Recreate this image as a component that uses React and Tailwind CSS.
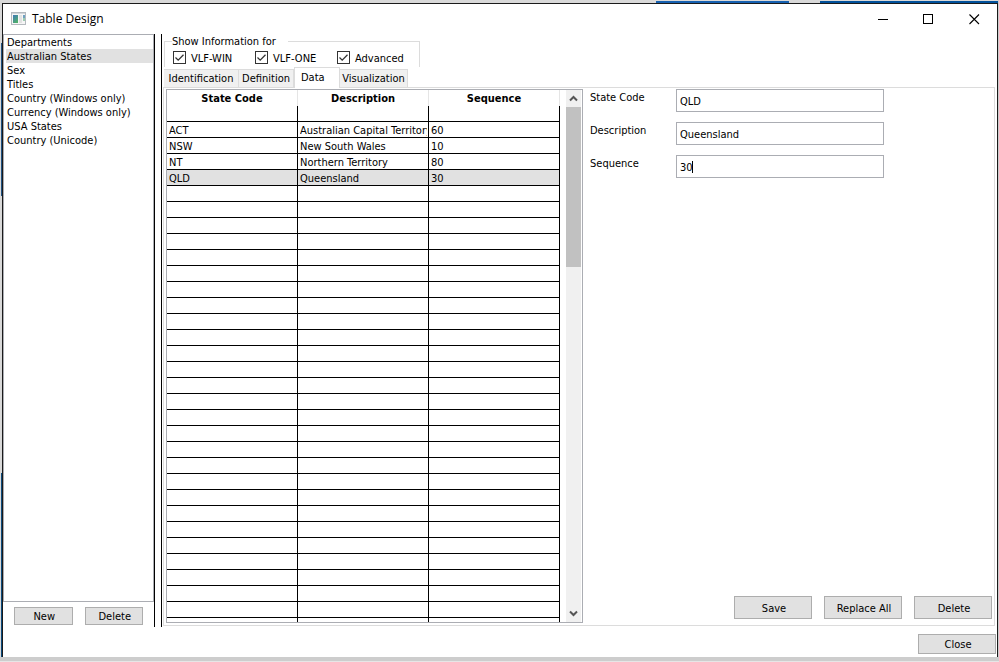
import { useState } from 'react';

const tables = [
  'Departments',
  'Australian States',
  'Sex',
  'Titles',
  'Country (Windows only)',
  'Currency (Windows only)',
  'USA States',
  'Country (Unicode)',
];

const columns = ['State Code', 'Description', 'Sequence'];

const states = [
  ['ACT', 'Australian Capital Territory', '60'],
  ['NSW', 'New South Wales', '10'],
  ['NT', 'Northern Territory', '80'],
  ['QLD', 'Queensland', '30'],
];

const emptyRows = Array.from({ length: 28 }, () => ['', '', '']);

const tabs = [
  { name: 'Identification', width: 'w-[75px]' },
  { name: 'Definition', width: 'w-[55px]' },
  { name: 'Data', width: 'w-[46px]' },
  { name: 'Visualization', width: 'w-[68px]' },
];

function PushButton({ children, className }) {
  return (
    <button type="button" className={`border border-[#adadad] bg-[#e1e1e1] pt-[2px] pl-[2px] text-center leading-[14px] ${className}`}>
      {children}
    </button>
  );
}

function Check({ label, className }) {
  return (
    <label className={`flex items-start gap-[5px] leading-[15px] ${className}`}>
      <span className="relative size-[13px]">
        <input type="checkbox" defaultChecked className="peer block size-[13px] appearance-none border border-[#333] bg-white" />
        <svg viewBox="0 0 13 13" className="pointer-events-none absolute inset-0 hidden size-[13px] peer-checked:block" fill="none" stroke="#333" strokeWidth="1.3">
          <path d="M2.5 6.5 5.2 9.2 10.5 3.8" />
        </svg>
      </span>
      {label}
    </label>
  );
}

function TitleBar() {
  return (
    <header className="flex h-[30px] shrink-0 items-center pl-2">
      <svg width="15" height="15" viewBox="0 0 15 15" className="shrink-0">
        <defs>
          <linearGradient id="pane" x1="0" y1="0" x2="0.6" y2="1">
            <stop offset="0" stopColor="#3f78b8" />
            <stop offset="1" stopColor="#4fae6c" />
          </linearGradient>
        </defs>
        <rect x="0.5" y="0.5" width="14" height="12" fill="#f6f6f6" stroke="#b4b9be" />
        <rect x="1" y="1" width="13" height="1" fill="#d2d6da" />
        <rect x="2" y="3" width="5" height="8" fill="url(#pane)" />
        <rect x="8" y="3" width="3" height="8" fill="#e2e2e2" />
        <rect x="12" y="3" width="2" height="3" fill="#6fa0c0" />
        <rect x="12" y="6" width="2" height="3" fill="#9ccbb0" />
      </svg>
      <h1 className="flex-1 pl-[6px] font-['Open_Sans',sans-serif] text-[12px] leading-4">Table Design</h1>
      <div className="flex pr-[17px]">
        <button type="button" aria-label="Minimize" className="w-[46px]">
          <svg width="11" height="11" className="ml-auto" shapeRendering="crispEdges">
            <path d="M0 5.5h10" stroke="#000" />
          </svg>
        </button>
        <button type="button" aria-label="Maximize" className="w-[45px]">
          <svg width="11" height="11" className="ml-auto" fill="none" shapeRendering="crispEdges">
            <rect x="0.5" y="0.5" width="9" height="9" stroke="#000" />
          </svg>
        </button>
        <button type="button" aria-label="Close window" className="w-[46px]">
          <svg width="11" height="11" className="ml-auto">
            <path d="M0.5 0.5 10 10M10 0.5 0.5 10" stroke="#000" strokeWidth="1.1" />
          </svg>
        </button>
      </div>
    </header>
  );
}

function Sidebar() {
  const [selected, setSelected] = useState('Australian States');

  return (
    <aside className="flex w-[152px] shrink-0 flex-col border-r border-black">
      <ul className="flex-1 border border-[#abadb3] pl-[2px]">
        {tables.map((name) => (
          <li key={name}>
            <button
              type="button"
              onClick={() => setSelected(name)}
              className={`block w-full pt-px pl-px text-left leading-[13px] ${name === selected ? 'bg-[#e1e1e1]' : ''}`}
            >
              {name}
            </button>
          </li>
        ))}
      </ul>
      <div className="flex h-[25px] gap-3 px-[11px] pt-[5px]">
        <PushButton className="h-[18px] flex-1">New</PushButton>
        <PushButton className="h-[18px] flex-1">Delete</PushButton>
      </div>
    </aside>
  );
}

function DataGrid() {
  return (
    <div className="flex w-[417px] overflow-hidden border border-[#abadb3]">
      <div className="relative w-[399px]">
        <div className="absolute inset-0 overflow-hidden">
          <table className="w-[393px] table-fixed border-separate border-spacing-0">
            <thead>
              <tr>
                {columns.map((name) => (
                  <th key={name} className="h-4 border-r border-[#e5e5e5] p-0 text-center font-bold">
                    <div className="h-4 overflow-hidden leading-[18px]">{name}</div>
                  </th>
                ))}
              </tr>
            </thead>
            <tbody>
              {[['', '', ''], ...states, ...emptyRows].map((row, i) => (
                <tr key={i} className={row[0] === 'QLD' ? 'bg-[#e1e1e1]' : ''}>
                  {row.map((cell, j) => (
                    <td key={j} className="h-4 border-r border-b border-black p-0 pr-px pl-[2px]">
                      <div className="h-[15px] overflow-hidden leading-[17px] whitespace-nowrap">{cell}</div>
                    </td>
                  ))}
                </tr>
              ))}
            </tbody>
          </table>
        </div>
      </div>
      <div className="flex w-[15px] flex-col bg-[#f0f0f0]">
        <button type="button" aria-label="Scroll up" className="flex h-[17px] items-center justify-center">
          <svg width="9" height="7" fill="none" stroke="#555" strokeWidth="2">
            <path d="M1 5.5 4.5 2 8 5.5" />
          </svg>
        </button>
        <div className="h-[30%] bg-[#c1c1c1]"></div>
        <button type="button" aria-label="Scroll down" className="mt-auto flex h-[17px] items-center justify-center">
          <svg width="9" height="7" fill="none" stroke="#555" strokeWidth="2">
            <path d="M1 1.5 4.5 5 8 1.5" />
          </svg>
        </button>
      </div>
    </div>
  );
}

function Field({ id, label, value, caret }) {
  return (
    <div className="flex h-[23px]">
      <label htmlFor={id} className="w-[86px] leading-[18px]">{label}</label>
      <div className="relative w-[208px]">
        <input id={id} defaultValue={value} className="block h-[23px] w-full border border-[#abadb3] bg-white px-[3px] pt-[2px] outline-none" />
        {caret && <span className="absolute top-[6px] left-[16px] h-3 w-px bg-black"></span>}
      </div>
    </div>
  );
}

function DataTab() {
  return (
    <div className="mb-px flex flex-1 border-x border-b border-[#dcdcdc] px-[2px] pt-px pb-[2px]">
      <DataGrid />
      <div className="flex flex-1 flex-col pl-[7px]">
        <form className="flex flex-col gap-[10px]">
          <Field id="code" label="State Code" value="QLD" />
          <Field id="description" label="Description" value="Queensland" />
          <Field id="sequence" label="Sequence" value="30" caret />
        </form>
        <div className="mt-auto flex justify-end gap-3 pb-1">
          <PushButton className="h-[23px] w-[78px]">Save</PushButton>
          <PushButton className="h-[23px] w-[78px]">Replace All</PushButton>
          <PushButton className="h-[23px] w-[78px]">Delete</PushButton>
        </div>
      </div>
    </div>
  );
}

function Editor() {
  const [tab, setTab] = useState('Data');

  return (
    <main className="flex flex-1 flex-col pr-[2px] pl-px">
      <fieldset className="ml-px h-[33px] w-[256px] border border-b-0 border-[#dcdcdc] pl-[7px]">
        <legend className="pt-px pr-3 leading-[13px]">Show Information for</legend>
        <div className="flex pt-[3px] pl-px">
          <Check label="VLF-WIN" className="w-[82px]" />
          <Check label="VLF-ONE" className="w-[82px]" />
          <Check label="Advanced" className="" />
        </div>
      </fieldset>
      <div className="flex h-[21px] items-end border-b border-[#dcdcdc] pl-px">
        {tabs.map(({ name, width }) => (
          <button
            key={name}
            type="button"
            onClick={() => setTab(name)}
            className={
              name === tab
                ? `-mb-px h-[21px] border border-b-0 border-[#dcdcdc] bg-white pb-px pl-[6px] text-left leading-4 ${width}`
                : `h-[18px] border-t border-r border-[#dcdcdc] bg-[#f0f0f0] pt-px text-center leading-4 whitespace-nowrap ${width}`
            }
          >
            {name}
          </button>
        ))}
      </div>
      <DataTab />
    </main>
  );
}

export default function App() {
  return (
    <div className="flex h-screen flex-col border-b border-[#e6e6e6] bg-[#cdcdcd] pr-px pb-[4px] font-['DejaVu_Sans_Condensed','DejaVu_Sans',sans-serif] text-[11px] text-black">
      <div className="flex h-[3px] shrink-0 items-end bg-[#d9d9d9]">
        <div className="flex-1"></div>
        <div className="h-[2px] w-[133px] bg-[#1560b0]"></div>
        <div className="w-[31px]"></div>
        <div className="h-[2px] w-[178px] bg-[#00509a]"></div>
      </div>
      <div className="flex flex-1">
        <div className="flex w-[2px] shrink-0 flex-col bg-[#d9d9d9] pt-[4%] pl-px">
          <div className="h-1/4 bg-[#1d5080]"></div>
          <div className="h-[45%]"></div>
          <div className="flex-1 bg-[#0a4a7c]"></div>
        </div>
        <div className="flex flex-1 flex-col border-x border-t border-[#1a1a1a] bg-white">
          <TitleBar />
          <div className="flex flex-1">
            <Sidebar />
            <div className="w-[7px] shrink-0 border-r border-black"></div>
            <Editor />
          </div>
          <footer className="flex justify-end pt-[7px] pr-px pb-[3px]">
            <PushButton className="h-5 w-[78px]">Close</PushButton>
          </footer>
        </div>
      </div>
    </div>
  );
}
